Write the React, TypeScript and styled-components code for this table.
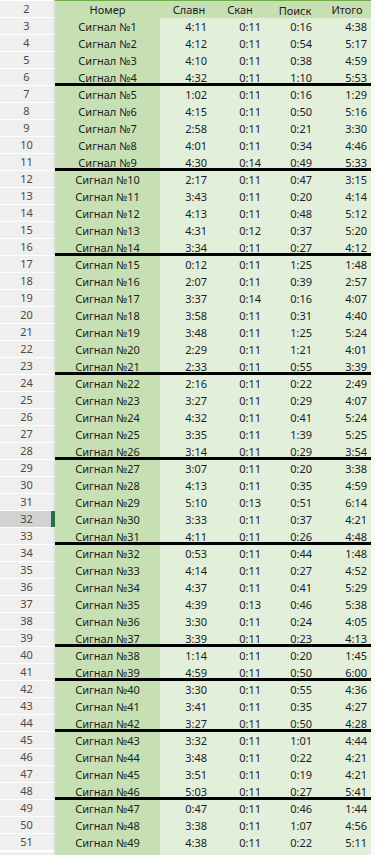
import styled, { createGlobalStyle } from "styled-components";

const GlobalStyle = createGlobalStyle`
  html, body {
    margin: 0;
    padding: 0;
    background: #fafafa;
  }
  body {
    font-family: "Noto Sans", "Liberation Sans", sans-serif;
    font-size: 11px;
    color: #1c1c1c;
  }
`;

const COLS = "55px 105px 51px 54px 51px 55px 1fr";

const Sheet = styled.div`
  width: 375px;
  height: 855px;
  overflow: hidden;
  display: flex;
  flex-direction: column;
`;

const Row = styled.div`
  display: grid;
  grid-template-columns: ${COLS};
  height: 17px;
  flex: none;
`;

const TopStrip = styled.div`
  display: grid;
  grid-template-columns: 55px 316px 1fr;
  height: 1px;
  flex: none;
  .head {
    background: #ffffff;
    border-right: 2px solid #e4e4e4;
  }
  .line {
    background: #70ad47;
  }
`;

const RowHead = styled.div<{ $selected?: boolean }>`
  position: relative;
  box-sizing: border-box;
  background: ${(p) => (p.$selected ? "#d2d2d2" : "#efefef")};
  border-bottom: 1px solid #ffffff;
  border-right: 2px solid #e4e4e4;
  color: #4a4a4a;
  display: flex;
  align-items: flex-end;
  justify-content: center;
  padding-bottom: 1px;
  line-height: 14px;
  &::after {
    content: "";
    display: ${(p) => (p.$selected ? "block" : "none")};
    position: absolute;
    top: 0;
    right: -2px;
    width: 4px;
    height: 16px;
    background: #217346;
  }
`;

const Cell = styled.div<{
  $tone: "dark" | "light";
  $align?: "center" | "right";
  $divider?: boolean;
  $shift?: number;
  $drop?: number;
}>`
  box-sizing: border-box;
  background: ${(p) => (p.$tone === "dark" ? "#c6e0b4" : "#e2efda")};
  box-shadow: ${(p) => (p.$divider ? "inset 0 -3px 0 #000000" : "none")};
  display: flex;
  align-items: flex-end;
  justify-content: ${(p) => (p.$align === "right" ? "flex-end" : "center")};
  padding-right: ${(p) => (p.$align === "right" ? "4px" : "0")};
  padding-left: ${(p) => (p.$shift ? `${p.$shift}px` : "0")};
  padding-bottom: ${(p) => 1 - (p.$drop || 0)}px;
  line-height: 14px;
  white-space: nowrap;
  overflow: hidden;
`;

const Edge = styled.div`
  background: #fafafa;
`;

const BottomStrip = styled.div`
  display: grid;
  grid-template-columns: 55px 105px 211px 1fr;
  height: 4px;
  flex: none;
  .head {
    background: #efefef;
    border-top: 1px solid #ffffff;
    border-right: 2px solid #e4e4e4;
  }
  .name {
    background: #c6e0b4;
  }
  .data {
    background: #e2efda;
  }
`;

type Entry = [string, string, string, string];

const data: Entry[] = [
  ["4:11", "0:11", "0:16", "4:38"],
  ["4:12", "0:11", "0:54", "5:17"],
  ["4:10", "0:11", "0:38", "4:59"],
  ["4:32", "0:11", "1:10", "5:53"],
  ["1:02", "0:11", "0:16", "1:29"],
  ["4:15", "0:11", "0:50", "5:16"],
  ["2:58", "0:11", "0:21", "3:30"],
  ["4:01", "0:11", "0:34", "4:46"],
  ["4:30", "0:14", "0:49", "5:33"],
  ["2:17", "0:11", "0:47", "3:15"],
  ["3:43", "0:11", "0:20", "4:14"],
  ["4:13", "0:11", "0:48", "5:12"],
  ["4:31", "0:12", "0:37", "5:20"],
  ["3:34", "0:11", "0:27", "4:12"],
  ["0:12", "0:11", "1:25", "1:48"],
  ["2:07", "0:11", "0:39", "2:57"],
  ["3:37", "0:14", "0:16", "4:07"],
  ["3:58", "0:11", "0:31", "4:40"],
  ["3:48", "0:11", "1:25", "5:24"],
  ["2:29", "0:11", "1:21", "4:01"],
  ["2:33", "0:11", "0:55", "3:39"],
  ["2:16", "0:11", "0:22", "2:49"],
  ["3:27", "0:11", "0:29", "4:07"],
  ["4:32", "0:11", "0:41", "5:24"],
  ["3:35", "0:11", "1:39", "5:25"],
  ["3:14", "0:11", "0:29", "3:54"],
  ["3:07", "0:11", "0:20", "3:38"],
  ["4:13", "0:11", "0:35", "4:59"],
  ["5:10", "0:13", "0:51", "6:14"],
  ["3:33", "0:11", "0:37", "4:21"],
  ["4:11", "0:11", "0:26", "4:48"],
  ["0:53", "0:11", "0:44", "1:48"],
  ["4:14", "0:11", "0:27", "4:52"],
  ["4:37", "0:11", "0:41", "5:29"],
  ["4:39", "0:13", "0:46", "5:38"],
  ["3:30", "0:11", "0:24", "4:05"],
  ["3:39", "0:11", "0:23", "4:13"],
  ["1:14", "0:11", "0:20", "1:45"],
  ["4:59", "0:11", "0:50", "6:00"],
  ["3:30", "0:11", "0:55", "4:36"],
  ["3:41", "0:11", "0:35", "4:27"],
  ["3:27", "0:11", "0:50", "4:28"],
  ["3:32", "0:11", "1:01", "4:44"],
  ["3:48", "0:11", "0:22", "4:21"],
  ["3:51", "0:11", "0:19", "4:21"],
  ["5:03", "0:11", "0:27", "5:41"],
  ["0:47", "0:11", "0:46", "1:44"],
  ["3:38", "0:11", "1:07", "4:56"],
  ["4:38", "0:11", "0:22", "5:11"],
];

// rows that get the thick black line under them
const dividers = [6, 11, 16, 23, 28, 33, 39, 41, 44, 48];
const selectedRow = 32;

const headers: { label: string; shift: number; drop?: number }[] = [
  { label: "Славн", shift: 7 },
  { label: "Скан", shift: 4 },
  { label: "Поиск", shift: 9, drop: 2 },
  { label: "Итого", shift: 7 },
];

const App = (): JSX.Element => {
  return (
    <>
      <GlobalStyle />
      <Sheet>
        <TopStrip>
          <div className="head" />
          <div className="line" />
          <Edge />
        </TopStrip>
        <Row>
          <RowHead>2</RowHead>
          <Cell $tone="dark">Номер</Cell>
          {headers.map((h) => (
            <Cell key={h.label} $tone="dark" $shift={h.shift} $drop={h.drop}>
              {h.label}
            </Cell>
          ))}
          <Edge />
        </Row>
        {data.map((values, i) => {
          const rowNum = i + 3;
          const divider = dividers.includes(rowNum);
          return (
            <Row key={rowNum}>
              <RowHead $selected={rowNum === selectedRow}>{rowNum}</RowHead>
              <Cell $tone="dark" $divider={divider}>
                Сигнал №{i + 1}
              </Cell>
              {values.map((v, j) => (
                <Cell key={j} $tone="light" $align="right" $divider={divider}>
                  {v}
                </Cell>
              ))}
              <Edge />
            </Row>
          );
        })}
        <BottomStrip>
          <div className="head" />
          <div className="name" />
          <div className="data" />
          <Edge />
        </BottomStrip>
      </Sheet>
    </>
  );
};

export default App;
